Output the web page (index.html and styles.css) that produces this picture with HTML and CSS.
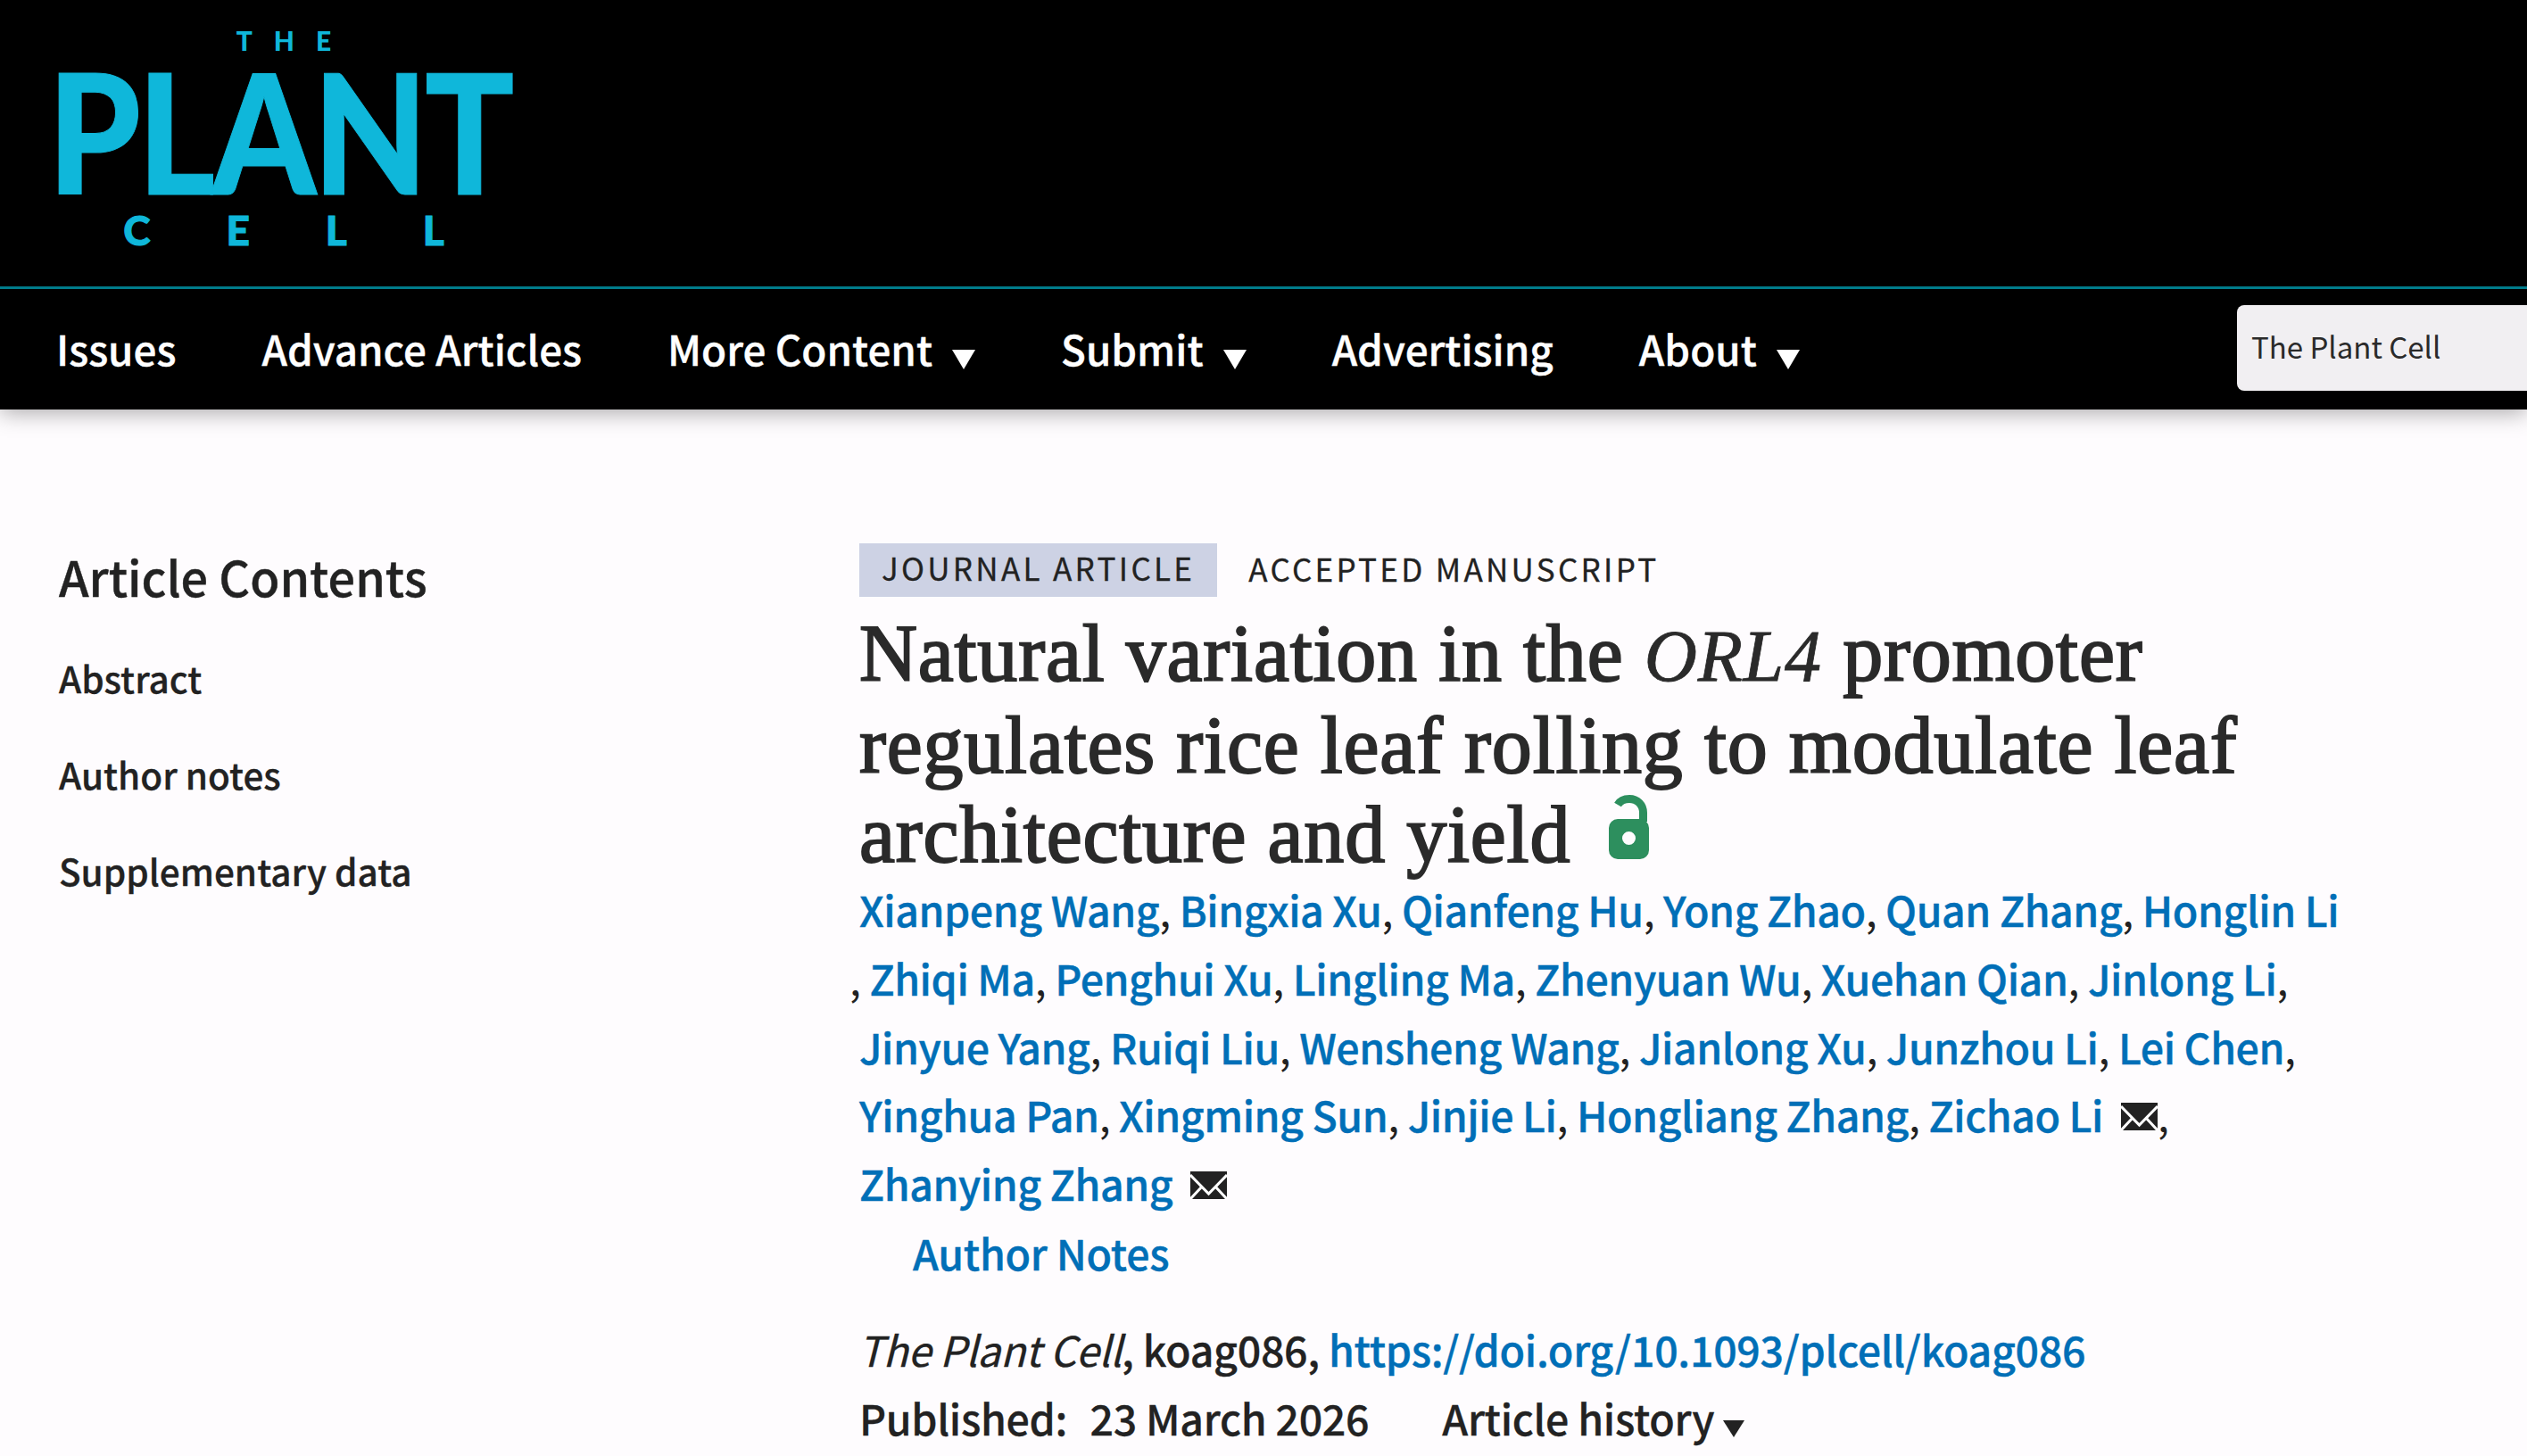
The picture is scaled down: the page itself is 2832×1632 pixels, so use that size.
FILE: index.html
```html
<!DOCTYPE html>
<html lang="en">
<head>
    <meta charset="UTF-8">
    <title>Natural variation in the ORL4 promoter</title>
    <link rel="stylesheet" href="styles.css">
</head>
<body>
    <header class="top">
        <div class="logoBar">
            <a class="logo" href="#">
                <span class="logoThe">THE</span>
                <span class="logoPlant">PLANT</span>
                <span class="logoCell">CELL</span>
            </a>
        </div>
        <nav class="mainNav">
            <a href="#">Issues</a>
            <a href="#">Advance Articles</a>
            <a href="#">More Content <i class="caret"></i></a>
            <a href="#">Submit <i class="caret"></i></a>
            <a href="#">Advertising</a>
            <a href="#">About <i class="caret"></i></a>
            <div class="searchBox">The Plant Cell</div>
        </nav>
    </header>

    <div class="page">
        <!-- Sidebar -->
        <aside class="sidebar">
            <h2>Article Contents</h2>
            <a href="#">Abstract</a>
            <a href="#">Author notes</a>
            <a href="#">Supplementary data</a>
        </aside>

        <!-- Article -->
        <main class="article">
            <div class="tags">
                <span class="tagType">JOURNAL ARTICLE</span>
                <span class="tagState">ACCEPTED MANUSCRIPT</span>
            </div>
            <h1>Natural variation in the <em>ORL4</em> promoter<br>regulates rice leaf rolling to modulate leaf<br>architecture and yield
                <svg class="lock" viewBox="0 0 45 72"><path d="M10 11C13 6 18 4.500 23 4.500c9 0 15.500 6.500 15.500 15.500v10" fill="none" stroke="#2d8f5e" stroke-width="9"/><path fill="#2d8f5e" fill-rule="evenodd" d="M10 27h25a10 10 0 0 1 10 10v25a10 10 0 0 1-10 10H10A10 10 0 0 1 0 62V37a10 10 0 0 1 10-10zm12.500 14a7.500 7.500 0 1 0 0 15 7.500 7.500 0 0 0 0-15z"/></svg>
            </h1>
            <div class="authors">
                <a href="#">Xianpeng Wang</a>, <a href="#">Bingxia Xu</a>, <a href="#">Qianfeng Hu</a>, <a href="#">Yong Zhao</a>, <a href="#">Quan Zhang</a>, <a href="#">Honglin Li</a><br>
                <span class="strayComma">,</span> <a href="#">Zhiqi Ma</a>, <a href="#">Penghui Xu</a>, <a href="#">Lingling Ma</a>, <a href="#">Zhenyuan Wu</a>, <a href="#">Xuehan Qian</a>, <a href="#">Jinlong Li</a>,<br>
                <a href="#">Jinyue Yang</a>, <a href="#">Ruiqi Liu</a>, <a href="#">Wensheng Wang</a>, <a href="#">Jianlong Xu</a>, <a href="#">Junzhou Li</a>, <a href="#">Lei Chen</a>,<br>
                <a href="#">Yinghua Pan</a>, <a href="#">Xingming Sun</a>, <a href="#">Jinjie Li</a>, <a href="#">Hongliang Zhang</a>, <a href="#">Zichao Li</a> <svg class="mail" viewBox="0 0 41 31"><path fill="#222" d="M0 0h41v31H0z"/><path d="M0 4l20.500 21L41 4M0 31l13-14M41 31L28 17" fill="none" stroke="#fff" stroke-width="3"/></svg>,<br>
                <a href="#">Zhanying Zhang</a> <svg class="mail" viewBox="0 0 41 31"><path fill="#222" d="M0 0h41v31H0z"/><path d="M0 4l20.500 21L41 4M0 31l13-14M41 31L28 17" fill="none" stroke="#fff" stroke-width="3"/></svg>
            </div>
            <a class="authorNotes" href="#">Author Notes</a>
            <div class="citation"><em>The Plant Cell</em>, koag086, <a href="#">https://doi.org/10.1093/plcell/koag086</a></div>
            <div class="published">
                <span>Published: &nbsp;<span class="pubDate">23 March 2026</span></span>
                <span class="history">Article history <i class="caret small"></i></span>
            </div>
        </main>
    </div>
</body>
</html>
```

FILE: styles.css
```css
* { box-sizing: border-box; }
html, body { height: 100%; }
body { margin: 0; height: 1632px; overflow: hidden; background: #fefcfe; color: #222; font-family: "Noto Sans CJK SC", "Noto Sans", sans-serif; }
a { color: inherit; text-decoration: none; }

.top { background: #000; box-shadow: 0 3px 24px rgba(0, 0, 0, 0.35); }
.logoBar { height: 324px; border-bottom: 3px solid #007b8a; padding: 30px 0 0 47px; }
.logo { display: flex; flex-direction: column; align-items: center; width: 542px; color: #0fb7da; font-family: Lato, sans-serif; font-weight: 900; line-height: 1; }
.logoThe { font-size: 30px; letter-spacing: 24px; margin-right: -24px; height: 37px; }
.logoPlant { font-size: 186px; height: 160px; line-height: 160px; letter-spacing: -4px; margin-top: -1px; transform: translateX(-5px) scaleX(0.895); -webkit-text-stroke: 1px #0fb7da; }
.logoCell { font-size: 46px; letter-spacing: 85px; margin-right: -85px; margin-top: 9px; -webkit-text-stroke: 1px #0fb7da; }

.mainNav { height: 135px; display: flex; align-items: center; gap: 96px; padding-left: 63px; color: #fff; font-size: 45.800px; font-weight: 500; white-space: nowrap; }
.mainNav > a { display: flex; align-items: center; gap: 22px; margin-top: -4px; -webkit-text-stroke: 0.4px #fff; }
.caret { display: inline-block; width: 0; height: 0; border-left: 13px solid transparent; border-right: 13px solid transparent; border-top: 22px solid currentColor; margin-top: 26px; }
.caret.small { border-left-width: 12px; border-right-width: 12px; border-top-width: 19px; margin-top: 0; vertical-align: -2px; }
.searchBox { margin-left: auto; width: 325px; height: 96px; margin-top: -4px; background: #f1eff2; color: #2a2a2a; border-radius: 8px 0 0 8px; padding-left: 16px; font-size: 33px; font-weight: 400; line-height: 92px; }

.page { display: flex; padding-top: 136px; }
.sidebar { width: 963px; padding-left: 66px; display: flex; flex-direction: column; align-items: flex-start; font-size: 40.500px; font-weight: 500; }
.sidebar h2 { margin: 6px 0 15px; font-size: 54px; font-weight: 500; line-height: 90px; -webkit-text-stroke: 0.4px #222; }
.sidebar a { line-height: 108px; height: 108px; -webkit-text-stroke: 0.3px #222; }

.article { flex: 1; }
.tags { display: flex; align-items: center; gap: 35px; height: 60px; margin-top: 14px; font-size: 35px; letter-spacing: 3.300px; -webkit-text-stroke: 0.3px #222; }
.tagType { background: #cdd2e4; padding: 0 25px; height: 60px; line-height: 54px; }
.tagState { line-height: 54px; margin-top: -4px; }
h1 { margin: 14px 0 0; font-family: "Liberation Serif", serif; font-size: 90px; font-weight: 400; letter-spacing: 0.800px; line-height: 100px; color: #2a2a2a; -webkit-text-stroke: 2px #2a2a2a; }
h1 em { font-size: 82px; -webkit-text-stroke: 0.800px #2a2a2a; }
.lock { width: 45px; height: 72px; margin-left: 19px; vertical-align: 3px; }
.authors { font-size: 46.500px; line-height: 76.800px; color: #222; margin-top: -5px; letter-spacing: -0.460px; }
.authors a, .authorNotes, .citation a { color: #006fb7; font-weight: 500; -webkit-text-stroke: 0.4px #006fb7; }
.strayComma { margin-left: -11px; }
.mail { width: 41px; height: 31px; margin-left: 10px; vertical-align: 2px; }
.authorNotes { display: block; margin-left: 60px; font-size: 46.500px; line-height: 77px; letter-spacing: -0.300px; }
.citation { font-size: 46.500px; font-weight: 500; line-height: 77px; margin-top: 31px; letter-spacing: -0.300px; -webkit-text-stroke: 0.3px #222; }
.citation em { font-weight: 400; margin-left: -1px; }
.published { display: flex; gap: 82px; font-size: 46.500px; font-weight: 500; line-height: 77px; letter-spacing: -0.300px; -webkit-text-stroke: 0.3px #222; }
.pubDate { margin-left: 5px; }
```
